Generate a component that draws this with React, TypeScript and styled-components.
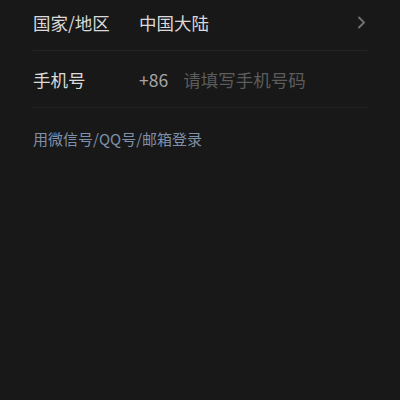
import React from "react";
import { styled, createGlobalStyle } from "styled-components";

const GlobalStyle = createGlobalStyle`
  html, body {
    margin:0;
    padding:0;
    background:#181818;
  }
  body {
    font-family: "Noto Sans CJK SC", "Noto Sans", sans-serif;
  }
`;

const Page = styled.div`
  width:400px;
  height:400px;
  background:#181818;
  overflow:hidden;
  display:flex;
  flex-direction:column;
  padding:0 33px;
  box-sizing:border-box;
`;

const Form = styled.div`
  display:flex;
  flex-direction:column;
  margin-top:-6px;
`;

const Row = styled.div`
  display:flex;
  flex-direction:row;
  align-items:center;
  height:56px;
  border-bottom:1px solid #232323;
  font-size:17.5px;
`;

const Label = styled.div`
  width:106px;
  flex-shrink:0;
  color:#dadada;
`;

const Value = styled.div`
  flex:1;
  color:#dadada;
`;

const Prefix = styled.span`
  color:#a6a6a6;
  margin-right:15px;
`;

const Placeholder = styled.span`
  color:#5c5c5c;
`;

const Chevron = styled.svg`
  width:9px;
  height:13px;
  margin-right:1px;
`;

const SwitchLink = styled.div`
  margin-top:21px;
  font-size:15px;
  line-height:20px;
  color:#7f90aa;
`;

const App: React.FC = () => {
  return (
    <>
      <GlobalStyle />
      <Page>
        <Form>
          <Row>
            <Label>国家/地区</Label>
            <Value>中国大陆</Value>
            <Chevron viewBox="0 0 9 13">
              <path d="M2 1.5 L7 6.5 L2 11.5" fill="none" stroke="#747474" strokeWidth="1.8" strokeLinecap="round" strokeLinejoin="round" />
            </Chevron>
          </Row>
          <Row>
            <Label>手机号</Label>
            <Value>
              <Prefix>+86</Prefix>
              <Placeholder>请填写手机号码</Placeholder>
            </Value>
          </Row>
        </Form>
        <SwitchLink>用微信号/QQ号/邮箱登录</SwitchLink>
      </Page>
    </>
  );
};

export default App;
